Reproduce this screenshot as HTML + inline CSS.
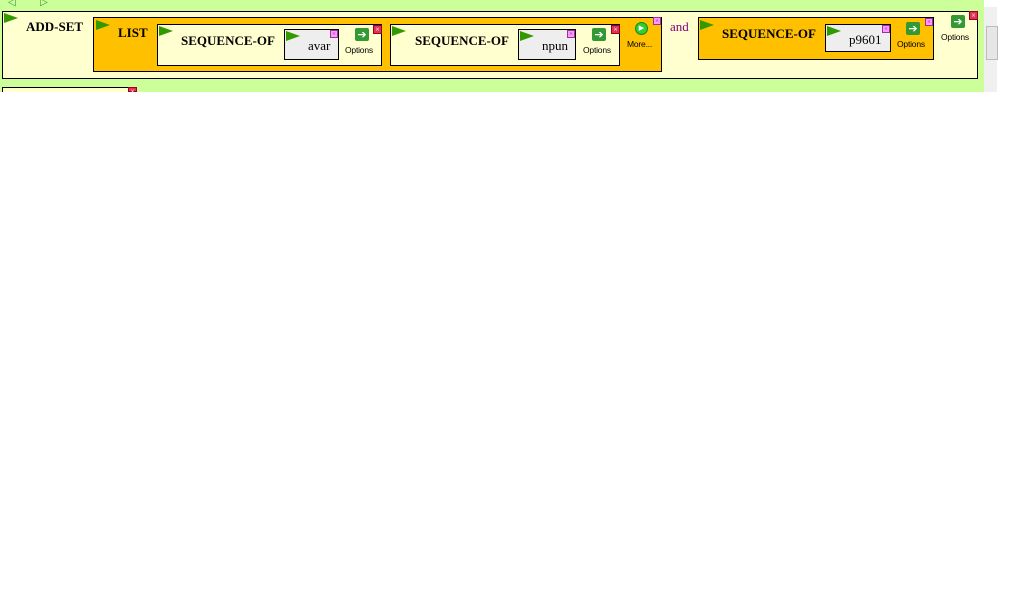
<!DOCTYPE html>
<html><head><style>
body{margin:0;width:1024px;height:600px;background:#fff;position:relative;overflow:hidden;font-family:"Liberation Serif",serif}
.a{position:absolute}
.g{background:#ccff99}
.box{position:absolute;border:1px solid #000;box-sizing:border-box}
.y{background:#ffffd0}
.o{background:#ffc000}
.gr{background:#eeeeee}
.t{position:absolute;font-weight:bold;font-size:13px;color:#000}
.tri{position:absolute;width:0;height:0;border-left:14px solid #339900;border-top:5px solid transparent;border-bottom:5px solid transparent}
.xm{position:absolute;width:8px;height:8px;border:1px solid #993399;background:#ff99ff;box-sizing:border-box;font-size:7px;line-height:6px;text-align:center;color:#993399}
.xr{position:absolute;width:9px;height:9px;background:#dd3355;border:1px solid #990022;box-sizing:border-box;font-size:8px;line-height:7px;text-align:center;color:#fff}
.op{position:absolute;font-family:"Liberation Sans",sans-serif;font-size:8.5px;color:#000;letter-spacing:-0.2px}
.ic{position:absolute;width:14px;height:13px;background:#339933;border-radius:2px;color:#fff;font-size:11px;line-height:13px;text-align:center;font-family:"DejaVu Sans",sans-serif}
</style></head><body>
<div class="a g" style="left:0;top:0;width:984px;height:92px"></div>
<div class="a" style="left:984px;top:7px;width:13px;height:85px;background:#f0f0f0"></div>
<div class="a" style="left:986px;top:26px;width:10px;height:32px;background:#e6e6e6;border:1px solid #bbb"></div>
<div class="a" style="left:8px;top:-3px;color:#339933;font-size:10px">◁</div>
<div class="a" style="left:40px;top:-3px;color:#339933;font-size:10px">▷</div>
<div class="box y" style="left:2px;top:11px;width:976px;height:68px"></div>
<div class="tri" style="left:4px;top:13px"></div>
<div class="t" style="left:26px;top:19px">ADD-SET</div>
<div class="box o" style="left:93px;top:17px;width:569px;height:55px"></div>
<div class="tri" style="left:96px;top:20px"></div>
<div class="t" style="left:118px;top:25px">LIST</div>
<div class="box y" style="left:157px;top:24px;width:225px;height:42px"></div>
<div class="tri" style="left:159px;top:26px"></div>
<div class="t" style="left:181px;top:33px">SEQUENCE-OF</div>
<div class="box gr" style="left:284px;top:29px;width:55px;height:31px"></div>
<div class="tri" style="left:286px;top:31px"></div>
<div class="a" style="left:308px;top:38px;font-size:13px">avar</div>
<div class="xm" style="left:330px;top:30px">×</div>
<div class="ic" style="left:355px;top:28px">➔</div>
<div class="op" style="left:345px;top:45px">Options</div>
<div class="xr" style="left:373px;top:25px">×</div>
<div class="box y" style="left:390px;top:24px;width:230px;height:42px"></div>
<div class="tri" style="left:392px;top:26px"></div>
<div class="t" style="left:415px;top:33px">SEQUENCE-OF</div>
<div class="box gr" style="left:518px;top:29px;width:58px;height:31px"></div>
<div class="tri" style="left:520px;top:31px"></div>
<div class="a" style="left:542px;top:38px;font-size:13px">npun</div>
<div class="xm" style="left:567px;top:30px">×</div>
<div class="ic" style="left:592px;top:28px">➔</div>
<div class="op" style="left:583px;top:45px">Options</div>
<div class="xr" style="left:611px;top:25px">×</div>
<div class="a" style="left:635px;top:22px;width:11px;height:11px;border-radius:50%;background:#33cc33;border:1px solid #118811;color:#fff;font-size:7px;line-height:11px;text-align:center">▶</div>
<div class="op" style="left:627px;top:39px">More...</div>
<div class="xm" style="left:653px;top:17px">×</div>
<div class="a" style="left:670px;top:19px;font-size:13px;color:#800080">and</div>
<div class="box o" style="left:698px;top:17px;width:236px;height:43px"></div>
<div class="tri" style="left:700px;top:20px"></div>
<div class="t" style="left:722px;top:26px">SEQUENCE-OF</div>
<div class="box gr" style="left:825px;top:24px;width:66px;height:28px"></div>
<div class="tri" style="left:827px;top:26px"></div>
<div class="a" style="left:849px;top:32px;font-size:13px">p9601</div>
<div class="xm" style="left:882px;top:25px">×</div>
<div class="ic" style="left:906px;top:22px">➔</div>
<div class="op" style="left:897px;top:39px">Options</div>
<div class="xm" style="left:925px;top:18px">×</div>
<div class="ic" style="left:951px;top:15px">➔</div>
<div class="op" style="left:941px;top:32px">Options</div>
<div class="xr" style="left:969px;top:11px">×</div>
<div class="a" style="left:2px;top:87px;width:135px;height:5px;border:1px solid #000;border-bottom:none;background:#ffffd0;box-sizing:border-box"></div>
<div class="xr" style="left:128px;top:87px;height:5px">×</div>
</body></html>
